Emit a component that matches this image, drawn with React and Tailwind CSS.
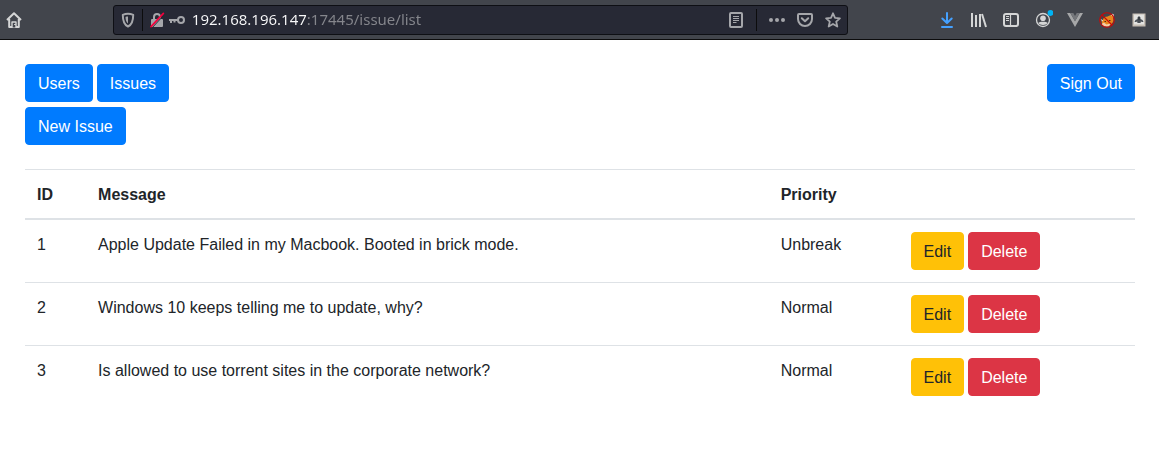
import React from "react";

const issues = [
  { id: 1, message: "Apple Update Failed in my Macbook. Booted in brick mode.", priority: "Unbreak" },
  { id: 2, message: "Windows 10 keeps telling me to update, why?", priority: "Normal" },
  { id: 3, message: "Is allowed to use torrent sites in the corporate network?", priority: "Normal" },
];

function Svg({ children, size = "size-4" }) {
  return (
    <svg viewBox="0 0 16 16" className={size} fill="none" stroke="currentColor" strokeWidth="2" strokeLinejoin="round" strokeLinecap="round" aria-hidden="true">
      {children}
    </svg>
  );
}

function ToolButton({ label, className = "w-8", children }) {
  return (
    <button type="button" aria-label={label} className={`flex h-8 shrink-0 items-center justify-center ${className}`}>
      {children}
    </button>
  );
}

function Toolbar() {
  return (
    <header className="flex h-10 items-center border-b border-[#0c0c0d] bg-[#42454c] pr-1 text-[#d5d6d6]">
      <ToolButton label="Home" className="w-7">
        <Svg>
          <path d="M1 8 8 1.2 15 8M3.200 7v8h9.600V7" strokeLinecap="butt" />
          <path d="M6 15.500V10h4v5.500" fill="#42454c" strokeWidth="1.400" />
          <path d="M8.500 12.500h1" strokeWidth="1" />
        </Svg>
      </ToolButton>
      <div className="flex-[85]" />
      <div className="flex h-[30px] flex-[735] items-center rounded-[3px] border border-[#0e0f14] bg-[#272935] text-[#a5a6aa]">
        <ToolButton label="Tracking protection" className="w-7">
          <Svg>
            <path d="M8 1.800c-1.800 0-3.600.4-5.200 1.100 0 5.400.8 9.500 5.200 11.600 4.400-2.100 5.200-6.200 5.200-11.600C11.600 2.200 9.800 1.800 8 1.800z" />
            <path d="M8 4.600c-1 0-1.700.1-2.500.4.1 3 .6 5.100 2.500 6.600z" fill="currentColor" stroke="none" />
          </Svg>
        </ToolButton>
        <span className="h-[22px] w-px bg-[#0c0c0d]" />
        <ToolButton label="Connection is not secure" className="ml-1 w-5">
          <Svg>
            <path d="M5 8V5a3 3 0 0 1 6 0v3" />
            <rect x="2" y="7" width="12" height="8" rx="1" fill="currentColor" stroke="none" />
            <path d="M3.300 15.600 15.400 2.600" stroke="#272935" strokeWidth="1" />
            <path d="M2 14.600 14.400 1.400" stroke="#f5003c" strokeWidth="1.700" />
          </Svg>
        </ToolButton>
        <ToolButton label="Saved logins" className="w-5">
          <Svg>
            <circle cx="12" cy="8" r="3" />
            <path d="M9 8H0M2 8v3M5.500 8v2.500" strokeLinecap="butt" />
          </Svg>
        </ToolButton>
        <input
          type="text"
          aria-label="Address"
          defaultValue="192.168.196.147:17445/issue/list"
          className="ml-[5px] h-7 w-0 min-w-0 flex-1 bg-[linear-gradient(to_right,#f9f9fa_114px,#85868c_114px)] bg-clip-text pb-[2px] font-['Noto_Sans',sans-serif] text-[15px] text-transparent caret-white outline-none"
        />
        <ToolButton label="Reader view" className="w-8">
          <Svg>
            <rect x="2" y="1" width="12" height="14" rx="1" />
            <path d="M5 4.500h6M5 6.500h6M5 8.500h6M5 10.500h3.500" strokeWidth="1" strokeLinecap="butt" />
          </Svg>
        </ToolButton>
        <span className="ml-1 h-[22px] w-px bg-[#0c0c0d]" />
        <ToolButton label="Page actions" className="ml-1 w-8">
          <Svg>
            <g fill="currentColor" stroke="none">
              <circle cx="2" cy="8" r="2" />
              <circle cx="8" cy="8" r="2" />
              <circle cx="14" cy="8" r="2" />
            </g>
          </Svg>
        </ToolButton>
        <ToolButton label="Save to Pocket" className="w-6">
          <Svg>
            <path d="M2 2h12a1 1 0 0 1 1 1v4a7 7 0 0 1-14 0V3a1 1 0 0 1 1-1z" />
            <path d="M4.800 6.300 8 9.300l3.200-3" />
          </Svg>
        </ToolButton>
        <ToolButton label="Bookmark this page" className="mr-[-2px] w-8">
          <Svg>
            <path d="m8 1.300 2 4.500 4.900.5-3.700 3.300 1.100 4.900L8 12l-4.300 2.500 1.100-4.900L1.100 6.300 6 5.800z" strokeWidth="1.800" />
          </Svg>
        </ToolButton>
      </div>
      <div className="flex-[83]" />
      <ToolButton label="Downloads">
        <span className="text-[#45a1ff]">
          <Svg>
            <path d="M8 1v9.500M3.300 6.500 8 11l4.700-4.500M3 15h10" />
          </Svg>
        </span>
      </ToolButton>
      <ToolButton label="Library">
        <Svg>
          <path d="M1 1v14M5 3v12M9 2v13M11 2l4 13" strokeLinecap="butt" />
        </Svg>
      </ToolButton>
      <ToolButton label="Sidebars">
        <Svg>
          <rect x="1" y="2" width="14" height="12" rx="2" />
          <path d="M7.500 2v12" strokeWidth="1.200" />
          <path d="M3 4.500h3M3 6.500h3M3 8.500h3" strokeWidth="1" strokeLinecap="butt" />
        </Svg>
      </ToolButton>
      <ToolButton label="Account">
        <svg viewBox="0 0 20 20" className="size-5" aria-hidden="true">
          <circle cx="10" cy="10" r="6.500" fill="none" stroke="currentColor" strokeWidth="1.300" />
          <circle cx="10" cy="8.300" r="2.800" fill="currentColor" />
          <path d="M5.300 13c1-1.800 8.400-1.800 9.400 0-1.300 2.600-8.100 2.600-9.400 0z" fill="currentColor" />
          <circle cx="17.500" cy="3" r="2.900" fill="#00b3f4" />
        </svg>
      </ToolButton>
      <ToolButton label="Vue devtools">
        <svg viewBox="0 0 16 16" className="size-4" aria-hidden="true">
          <path d="M0 1h3.300L8 9.200 12.700 1H16L8 15z" fill="#a6a7a8" />
          <path d="M3.300 1h3L8 4l1.700-3h3L8 9.200z" fill="#75777b" />
        </svg>
      </ToolButton>
      <ToolButton label="Proxy disabled">
        <svg viewBox="0 0 16 16" className="size-4" aria-hidden="true">
          <path d="m5.500 5 3-.5L14 2l.5 7-2 3.500L8 14.500 3.500 13l-1-3.500z" fill="#e8851c" />
          <path d="m2.500 12 2.500-1.500 2.500 2 4-1-1.500 3H5z" fill="#f3cda6" />
          <path d="M12 3.500 14 2l.5 3.500M1.800 7.500 4 9" stroke="#eee3d8" fill="none" />
          <path d="M5.500 9.500H7M10 8.500h1.500" stroke="#542b12" />
          <circle cx="8" cy="8" r="7.300" fill="none" stroke="#c90808" strokeWidth="1.100" />
          <path d="m3 3 10 10" stroke="#c90808" strokeWidth="1.100" />
        </svg>
      </ToolButton>
      <ToolButton label="User agent switcher">
        <svg viewBox="0 0 14 14" className="size-3.5" aria-hidden="true">
          <rect x=".5" y=".5" width="13" height="13" fill="#c5bdb3" />
          <rect x="2" y="1.500" width="10" height="10" fill="#e3e3e1" />
          <path d="M5.500 6V4.500L7 3l1.500 1.500V6l2 1 1 2H9.500L9 8l-.5 2h-3L5 8l-.5 1h-2l1-2z" fill="#4b5057" />
          <path d="M6.500 4h1v3h-1z" fill="#252a31" />
        </svg>
      </ToolButton>
    </header>
  );
}

const buttonColors = {
  primary: "border-[#007bff] bg-[#007bff] text-white",
  warning: "border-[#ffc107] bg-[#ffc107] text-[#212529]",
  danger: "border-[#dc3545] bg-[#dc3545] text-white",
};

function ActionButton({ color = "primary", children }) {
  return (
    <button type="button" className={`rounded border px-3 pt-[7px] pb-[5px] text-base leading-6 ${buttonColors[color]}`}>
      {children}
    </button>
  );
}

export default function App() {
  return (
    <div className="min-h-screen bg-white font-['Liberation_Sans',Arial,sans-serif] text-base text-[#212529]">
      <Toolbar />
      <main className="p-6 pl-[25px]">
        <nav className="flex items-start justify-between">
          <div className="flex gap-1">
            <ActionButton>Users</ActionButton>
            <ActionButton>Issues</ActionButton>
          </div>
          <ActionButton>Sign Out</ActionButton>
        </nav>
        <div className="mt-[5px]">
          <ActionButton>New Issue</ActionButton>
        </div>
        <table className="mt-6 w-full table-fixed border-separate border-spacing-0 text-left">
          <colgroup>
            <col className="w-[5.5%]" />
            <col className="w-[61.5%]" />
            <col className="w-[11.7%]" />
            <col />
          </colgroup>
          <thead>
            <tr className="*:border-t *:border-b-2 *:border-[#dee2e6] *:px-3 *:pt-[13px] *:pb-[11px]">
              <th scope="col">ID</th>
              <th scope="col">Message</th>
              <th scope="col">Priority</th>
              <td></td>
            </tr>
          </thead>
          <tbody className="[&>tr+tr>td]:border-t">
            {issues.map((issue) => (
              <tr key={issue.id} className="*:border-[#dee2e6] *:px-3 *:align-top">
                <td className="pt-[13px]">{issue.id}</td>
                <td className="pt-[13px]">{issue.message}</td>
                <td className="pt-[13px]">{issue.priority}</td>
                <td className="py-3">
                  <div className="flex gap-1">
                    <ActionButton color="warning">Edit</ActionButton>
                    <ActionButton color="danger">Delete</ActionButton>
                  </div>
                </td>
              </tr>
            ))}
          </tbody>
        </table>
      </main>
    </div>
  );
}
